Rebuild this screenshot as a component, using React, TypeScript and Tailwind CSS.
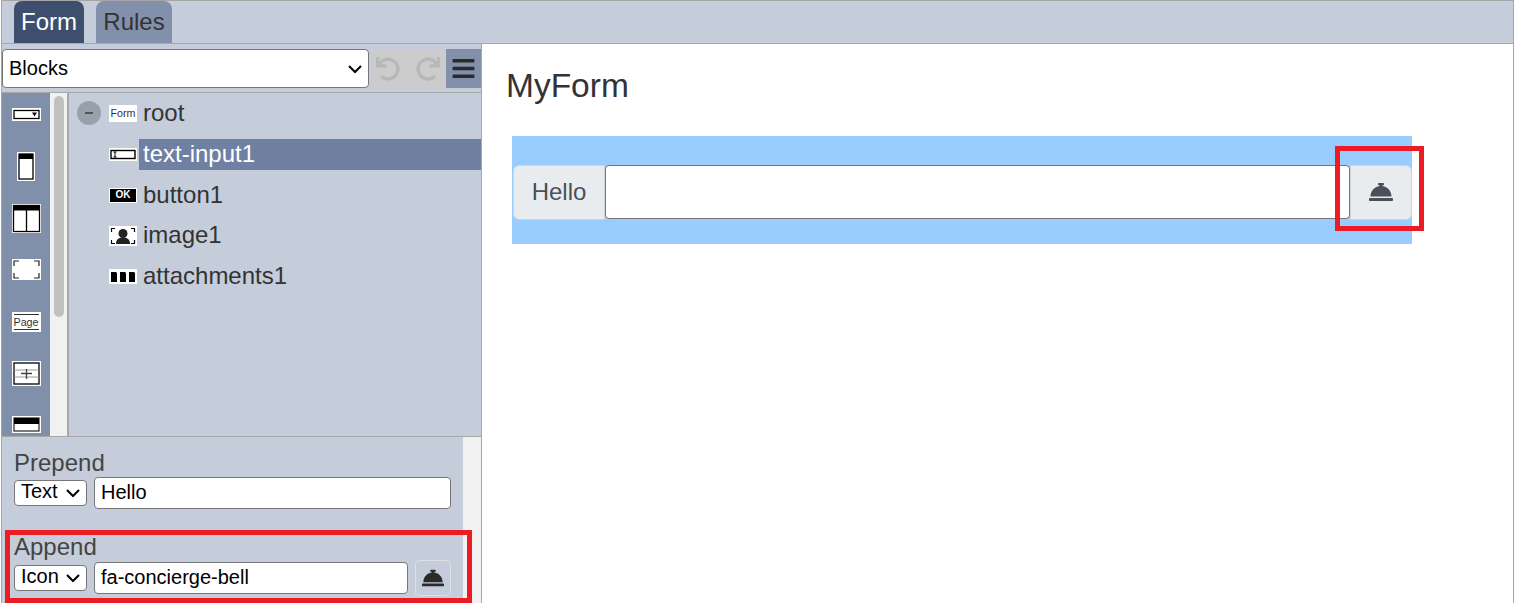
import { FaBars, FaConciergeBell, FaUndo, FaRedo } from "react-icons/fa";

const treeRows = [
  { name: "text-input1", icon: <InputIcon />, selected: true },
  { name: "button1", icon: <OkIcon /> },
  { name: "image1", icon: <ImageIcon /> },
  { name: "attachments1", icon: <AttachIcon /> },
];

function InputIcon() {
  return (
    <svg width="28" height="13" viewBox="0 0 28 13">
      <rect width="28" height="13" fill="#fff" />
      <rect x="2" y="2.500" width="24" height="8" fill="#fff" stroke="#000" strokeWidth="1.400" />
      <path d="M4.500 4h3M6 4v5M4.500 9h3" stroke="#000" strokeWidth="1" fill="none" />
    </svg>
  );
}

function OkIcon() {
  return (
    <div className="flex h-[15px] w-[28px] items-center justify-center border border-white bg-black text-[10px] leading-none font-bold text-white">
      OK
    </div>
  );
}

function ImageIcon() {
  return (
    <svg width="28" height="20" viewBox="0 0 28 20">
      <rect width="28" height="20" fill="#fff" />
      <path d="M6 2.500H2.500V6M22 2.500h3.500V6M6 17.500H2.500V14M22 17.500h3.500V14" stroke="#000" strokeWidth="1.200" fill="none" />
      <circle cx="14" cy="7.500" r="4.500" fill="#222" />
      <path d="M7 18c0-5 3-6.500 7-6.500s7 1.500 7 6.500z" fill="#222" />
    </svg>
  );
}

function AttachIcon() {
  return (
    <svg width="28" height="15" viewBox="0 0 28 15">
      <rect width="28" height="15" fill="#fff" />
      <path d="M2 3h5l1 1v9H2zM11 3h5l1 1v9h-6zM20 3h5l1 1v9h-6z" fill="#000" />
    </svg>
  );
}

function PaletteIcons() {
  return (
    <div className="-mt-[4px] flex w-[48px] shrink-0 flex-col items-center bg-[#8090ab]">
      <PaletteSlot>
        <svg width="29" height="13" viewBox="0 0 29 13">
          <rect width="29" height="13" fill="#fff" />
          <rect x="2" y="2.500" width="25" height="8" fill="#fff" stroke="#000" strokeWidth="1.300" />
          <path d="M20 4.500h5l-2.500 4z" fill="#000" />
        </svg>
      </PaletteSlot>
      <PaletteSlot>
        <svg width="18" height="29" viewBox="0 0 18 29">
          <rect width="18" height="29" fill="#fff" />
          <rect x="2" y="2" width="14" height="25" fill="#fff" stroke="#000" strokeWidth="1.300" />
          <rect x="2" y="2" width="14" height="5" fill="#000" />
        </svg>
      </PaletteSlot>
      <PaletteSlot>
        <svg width="29" height="29" viewBox="0 0 29 29">
          <rect width="29" height="29" fill="#fff" />
          <rect x="1.500" y="1.500" width="26" height="26" fill="#fff" stroke="#000" strokeWidth="1.300" />
          <rect x="1.500" y="1.500" width="26" height="5" fill="#000" />
          <path d="M14.500 6v21" stroke="#000" strokeWidth="1.300" />
        </svg>
      </PaletteSlot>
      <PaletteSlot>
        <svg width="29" height="21" viewBox="0 0 29 21">
          <rect width="29" height="21" fill="#fff" />
          <path d="M7 2H2v5M22 2h5v5M7 19H2v-5M22 19h5v-5" stroke="#222" strokeWidth="1.200" fill="none" />
        </svg>
      </PaletteSlot>
      <PaletteSlot>
        <div className="flex h-[20px] w-[29px] items-center justify-center border-x-2 border-white bg-white">
          <div className="w-full border-y border-[#333] text-center text-[10.700px] leading-[14px] text-[#333]">Page</div>
        </div>
      </PaletteSlot>
      <PaletteSlot>
        <svg width="29" height="25" viewBox="0 0 29 25">
          <rect width="29" height="25" fill="#fff" />
          <rect x="2" y="2" width="25" height="21" fill="#fff" stroke="#000" strokeWidth="1.300" />
          <path d="M2 9h25M2 16h25" stroke="#999" strokeWidth="1" />
          <path d="M9 12.500h11M14.500 8v10" stroke="#444" strokeWidth="1.300" />
        </svg>
      </PaletteSlot>
      <PaletteSlot>
        <svg width="29" height="17" viewBox="0 0 29 17">
          <rect width="29" height="17" fill="#fff" />
          <rect x="2" y="2" width="25" height="13" fill="#fff" stroke="#333" strokeWidth="1.300" />
          <rect x="2" y="2" width="25" height="6" fill="#000" />
        </svg>
      </PaletteSlot>
    </div>
  );
}

function PaletteSlot({ children }: { children: React.ReactNode }) {
  return <div className="flex h-[51.700px] w-full shrink-0 items-center justify-center">{children}</div>;
}

function Chevron() {
  return (
    <svg className="pointer-events-none absolute top-1/2 right-[7px] -translate-y-1/2" width="14" height="9" viewBox="0 0 14 9">
      <path d="M1 1.500l6 6 6-6" stroke="#000" strokeWidth="2" fill="none" />
    </svg>
  );
}

function Select({ value, className, padClass }: { value: string; className: string; padClass: string }) {
  return (
    <div className={`relative shrink-0 ${className}`}>
      <select
        defaultValue={value}
        className={`h-full w-full appearance-none rounded border border-[#767676] bg-white pl-[6px] text-[20px] text-black ${padClass}`}
      >
        <option>{value}</option>
      </select>
      <Chevron />
    </div>
  );
}

export default function App() {
  return (
    <div className="relative h-[603px] w-[1517px] overflow-hidden bg-white pl-px font-['Liberation_Sans',Arial,sans-serif] text-[#333]">
      <div className="flex h-full w-[1513px] flex-col border-x border-t border-[#808080]/70">
        {/* tabs */}
        <div className="flex h-[43px] shrink-0 items-end gap-3 border-b border-[#a8a8a8] bg-[#c5cddb] pl-3">
          <div className="flex h-[42px] w-[70px] items-center justify-center rounded-t-lg bg-[#3e4f6e] text-[24px] text-white">
            Form
          </div>
          <div className="flex h-[42px] w-[76px] items-center justify-center rounded-t-lg bg-[#8390ab] text-[24px] text-[#333]">
            Rules
          </div>
        </div>

        <div className="flex min-h-0 flex-1">
          {/* left panel */}
          <div className="flex w-[480px] shrink-0 flex-col border-r border-[#a8a8a8] bg-[#c5cddb]">
            <div className="flex h-[49px] shrink-0 items-start border-b border-[#a8a8a8] pt-[5px]">
              <Select value="Blocks" className="h-[39px] w-[367px]" padClass="pb-[2px]" />
              <div className="ml-[3px] flex h-[39px] w-[74px] items-center gap-[16px] bg-[#cccccc] pl-[4px] text-[24px] text-[#b8b8b8]">
                <FaUndo />
                <FaRedo />
              </div>
              <div className="flex h-[39px] w-[35px] items-center justify-center bg-[#8390ab] text-[25px] text-[#2b2b2b]">
                <FaBars />
              </div>
            </div>

            <div className="flex h-[344px] shrink-0 overflow-hidden border-b border-[#a8a8a8]">
              <PaletteIcons />
              <div className="w-[19px] shrink-0 border-r-2 border-[#a8a8a8] bg-[#f1f1f1] px-1 pt-[3px]">
                <div className="h-[221px] w-[10px] rounded-full bg-[#c1c1c1]" />
              </div>
              <div className="min-w-0 flex-1 pt-[4px]">
                <div className="flex h-[32px] items-center">
                  <div className="ml-2 flex h-6 w-6 items-center justify-center rounded-full bg-[#98a0ac]">
                    <div className="h-[2px] w-2 bg-[#555]" />
                  </div>
                  <div className="ml-[8px] flex h-[17px] w-[28px] items-center justify-center bg-white text-[10.700px] leading-none">
                    Form
                  </div>
                  <span className="ml-[6px] text-[24px]">root</span>
                </div>
                <div className="mt-[9.700px] flex flex-col gap-[9px]">
                  {treeRows.map((row) => (
                    <div key={row.name} className="flex h-[31.700px] items-center pl-[40px]">
                      <div className="flex w-[30px] shrink-0 justify-start">{row.icon}</div>
                      <span className={`w-full px-1 pb-[2px] text-[24px] leading-[29px] ${row.selected ? "bg-[#6f80a3] text-white" : ""}`}>
                        {row.name}
                      </span>
                    </div>
                  ))}
                </div>
              </div>
            </div>

            {/* properties */}
            <div className="flex min-h-0 flex-1 overflow-hidden">
              <div className="flex-1 pl-3 pr-3 pt-[12px]">
                <div className="text-[24px] leading-[28px] text-[#444]">Prepend</div>
                <div className="flex items-center gap-[7px]">
                  <Select value="Text" className="h-[26px] w-[73px]" padClass="pb-[4px] leading-none" />
                  <input readOnly value="Hello" className="h-[32px] w-[357px] rounded border border-[#767676] bg-white px-[6px] pb-[2px] text-[20px] text-black" />
                </div>
                <div className="mt-[25px] text-[24px] leading-[26px] text-[#444]">Append</div>
                <div className="flex items-center gap-[7px]">
                  <Select value="Icon" className="h-[26px] w-[73px]" padClass="pb-[4px] leading-none" />
                  <input readOnly value="fa-concierge-bell" className="h-[32px] w-[314px] rounded border border-[#767676] bg-white px-[6px] pb-[2px] text-[20px] text-black" />
                  <div className="flex h-[36px] w-[36px] items-center justify-center rounded-sm border border-[#dde1e8] bg-[#c5cddb] text-[22px] text-[#2b2b2b]">
                    <FaConciergeBell />
                  </div>
                </div>
              </div>
              <div className="w-[18px] shrink-0 bg-[#f1f1f1]" />
            </div>
          </div>

          {/* form canvas */}
          <div className="min-w-0 flex-1 bg-white pl-[24px] pt-[22px]">
            <h1 className="text-[33.500px] leading-[40px] text-[#333]">MyForm</h1>
            <div className="mt-[30px] ml-[6px] flex h-[108px] w-[900px] items-center bg-[#99ccff] pt-1 pl-px">
              <div className="flex h-[55px] w-[92px] items-center justify-center rounded-l-md border border-[#ced4da] bg-[#e9ecef] text-[24px] text-[#495057]">
                Hello
              </div>
              <input readOnly className="h-[54px] w-[745px] rounded border border-[#767676] bg-white" />
              <div className="flex h-[55px] w-[62px] items-center justify-center rounded-r-md border border-[#ced4da] bg-[#e9ecef] text-[24px] text-[#495057]">
                <FaConciergeBell />
              </div>
            </div>
          </div>
        </div>
      </div>

      {/* red highlight boxes */}
      <div className="absolute left-[1335px] top-[146px] h-[85px] w-[89px] border-[5px] border-[#ed1c24]" />
      <div className="absolute left-[5px] top-[530px] h-[73px] w-[467px] border-[5px] border-[#ed1c24]" />
    </div>
  );
}
